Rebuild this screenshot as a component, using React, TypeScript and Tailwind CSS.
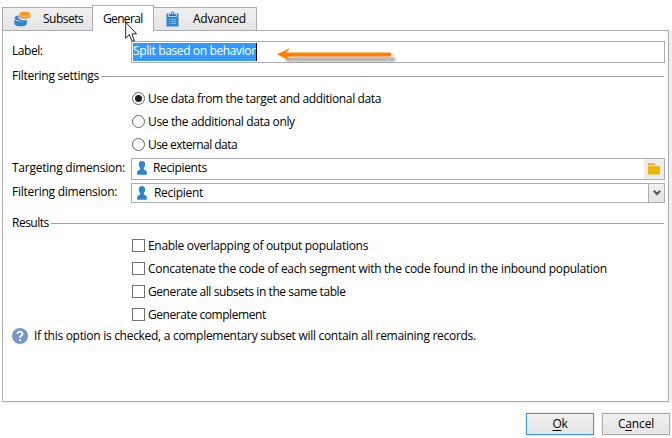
import type { ReactNode } from "react";

function SubsetsIcon() {
  return (
    <svg width="18" height="17" viewBox="0 0 18 17" className="shrink-0">
      <path d="M0.3 8C0.8 11 12.5 11 12.8 8.5V12.5C12.8 16.3 1 16.3 0.3 12.5Z" fill="#2f84d0" />
      <path d="M0.5 6.8C0.8 5.5 2.5 4.6 4.4 4.4V6.2C4.4 8.2 8 9.2 12.6 9C9.5 10.6 1 10.2 0.5 6.8Z" fill="#2f84d0" />
      <path d="M5 3.2V5.6C5 8.6 16.6 8.6 16.6 5.6V3.2Z" fill="#f39a1c" />
      <ellipse cx="10.8" cy="3" rx="5.8" ry="2.5" fill="#f39a1c" stroke="#ffe3b5" strokeWidth="0.6" />
    </svg>
  );
}

function ClipboardIcon() {
  return (
    <svg width="13" height="16" viewBox="0 0 13 16" className="shrink-0">
      <rect x="0.5" y="2.5" width="12" height="13" rx="0.5" fill="#2f84d0" />
      <path d="M2.5 5.5V3H4.3C4.3 -0.6 8.7 -0.6 8.7 3H10.5V5.5Z" fill="#2a6fb4" stroke="#e4eef8" strokeWidth="0.7" />
      <circle cx="6.5" cy="2.4" r="0.9" fill="#fff" />
      <path d="M3 8.5H4M5 8.5H10M3 10.5H4M5 10.5H10M3 12.5H4M5 12.5H10" stroke="#9fcdf2" strokeWidth="0.8" />
    </svg>
  );
}

function PersonIcon() {
  return (
    <svg width="10" height="14" viewBox="0 0 10 14" className="shrink-0">
      <path
        d="M5 0C7 0 8.2 1.4 8.2 3.4C8.2 5 7.6 6 6.9 6.8V8.6C8 9.2 9.9 9.8 9.9 11.4V13C9.9 13.5 9.5 13.8 9 13.8H1C0.5 13.8 0.1 13.5 0.1 13V11.4C0.1 9.8 2 9.2 3.1 8.6V6.8C2.4 6 1.8 5 1.8 3.4C1.8 1.4 3 0 5 0Z"
        fill="#2f84d0"
      />
    </svg>
  );
}

function FolderIcon() {
  return (
    <svg width="12" height="12" viewBox="0 0 12 12">
      <path d="M0 0.5H7V3H0Z" fill="#e08a2c" />
      <path d="M0 1.8H7.5L8 2.5H12V4H0Z" fill="#f7d8a8" />
      <path d="M0 3.3H12V11.5H0Z" fill="#efb800" />
    </svg>
  );
}

function Radio({ label, checked, tracking }: { label: string; checked?: boolean; tracking: string }) {
  return (
    <div className="flex h-[23px] items-center pl-[129px]">
      <span className="flex size-[13px] shrink-0 items-center justify-center rounded-full border border-[#666]">
        {checked && <span className="size-[7px] rounded-full bg-[#222]" />}
      </span>
      <span className={`ml-[3px] h-[17px] leading-[17px] ${tracking}`}>{label}</span>
    </div>
  );
}

function Check({ label, tracking }: { label: string; tracking: string }) {
  return (
    <div className="flex h-[23px] items-center pl-[129px]">
      <span className="size-[13px] shrink-0 border border-[#707070]" />
      <span className={`ml-[3px] h-[17px] leading-[17px] ${tracking}`}>{label}</span>
    </div>
  );
}

function Heading({ children, tracking }: { children: ReactNode; tracking: string }) {
  return (
    <div className="flex h-4 w-[661px] pl-[9px]">
      <span className={tracking}>{children}</span>
      <span className="mt-2 ml-[2px] h-px flex-1 bg-[#a0a0a0]" />
    </div>
  );
}

const tab = "flex border border-b-0 border-[#acacac]";
const idleTab = "h-[23px] bg-gradient-to-b from-[#f0f0f0] to-[#e5e5e5]";

export default function App() {
  return (
    <div className="relative h-[438px] w-[672px] overflow-hidden bg-white font-['Open_Sans','Noto_Sans',sans-serif] text-[12px] leading-4 whitespace-nowrap text-black">
      <div className="flex h-[30px] items-end pl-[2px]">
        <div className={`${tab} ${idleTab} w-[90px] border-r-0`}>
          <span className="mt-[3px] ml-[11px]"><SubsetsIcon /></span>
          <span className="mt-[3px] ml-[11px] tracking-[-0.5px]">Subsets</span>
        </div>
        <div className={`${tab} z-10 -mb-px h-[26px] w-[62px] bg-white`}>
          <span className="mt-[5px] ml-[10px] tracking-[-0.66px]">General</span>
        </div>
        <div className={`${tab} ${idleTab} w-[103px] border-l-0`}>
          <span className="mt-[3px] ml-[12px]"><ClipboardIcon /></span>
          <span className="mt-[3px] ml-[14px] tracking-[-0.25px]">Advanced</span>
        </div>
      </div>

      <div className="ml-[2px] h-[373px] bg-[#f0f0f0]">
        <div className="h-[372px] w-[667px] border border-[#acacac] bg-white pt-[10px]">
          <div className="flex h-[22px] pl-[9px]">
            <span className="mt-[2px] w-[119px] tracking-[-0.46px]">Label:</span>
            <div className="h-[22px] w-[534px] border border-[#abadb3] p-px">
              <span className="flex h-[18px] w-[124px] border-r border-black bg-[#3399ff] tracking-[-0.37px] text-white">
                <span>Split based on behavior</span>
              </span>
            </div>
          </div>

          <div className="mt-[5px]">
            <Heading tracking="tracking-[-0.27px]">Filtering settings</Heading>
          </div>
          <div className="mt-[3px]">
            <Radio checked label="Use data from the target and additional data" tracking="tracking-[-0.37px]" />
            <Radio label="Use the additional data only" tracking="tracking-[-0.35px]" />
            <Radio label="Use external data" tracking="tracking-[-0.55px]" />
          </div>

          <div className="mt-[2px] flex h-[22px] pl-[9px]">
            <span className="mt-[2px] w-[119px] tracking-[-0.24px]">Targeting dimension:</span>
            <div className="flex h-[22px] w-[534px] border border-[#abadb3]">
              <span className="mt-[2px] ml-[5px]"><PersonIcon /></span>
              <span className="mt-px ml-[6px] flex-1 tracking-[-0.36px]">Recipients</span>
              <span className="flex w-5 items-center justify-center bg-[#ececec]"><FolderIcon /></span>
            </div>
          </div>

          <div className="mt-[3px] flex h-[20px] pl-[9px]">
            <span className="mt-px w-[119px] tracking-[-0.25px]">Filtering dimension:</span>
            <div className="flex h-[20px] w-[534px] border border-[#abadb3]">
              <span className="mt-[2px] ml-[5px]"><PersonIcon /></span>
              <span className="mt-px ml-[7px] flex-1 tracking-[-0.3px]">Recipient</span>
              <span className="flex w-4 items-center justify-center border-l border-[#abadb3] bg-gradient-to-b from-[#f0f0f0] to-[#e5e5e5]">
                <svg width="8" height="6" viewBox="0 0 8 6">
                  <path d="M0.8 0.8L4 4L7.2 0.8" fill="none" stroke="#555" strokeWidth="2" />
                </svg>
              </span>
            </div>
          </div>

          <div className="mt-[12px]">
            <Heading tracking="tracking-[-0.5px]">Results</Heading>
          </div>
          <div className="mt-[3px]">
            <Check label="Enable overlapping of output populations" tracking="tracking-[-0.3px]" />
            <Check label="Concatenate the code of each segment with the code found in the inbound population" tracking="tracking-[-0.285px]" />
            <Check label="Generate all subsets in the same table" tracking="tracking-[-0.42px]" />
            <Check label="Generate complement" tracking="tracking-[-0.43px]" />
          </div>

          <div className="mt-[2px] flex h-4 pl-[9px]">
            <svg width="16" height="16" viewBox="0 0 16 16" className="shrink-0">
              <circle cx="8" cy="8" r="8" fill="#7596c8" />
              <path d="M5.5 6C5.5 2.8 10.6 2.9 10.5 5.9C10.4 7.7 8.1 7.6 8.1 9.7" fill="none" stroke="#fff" strokeWidth="1.9" />
              <circle cx="8.1" cy="12.2" r="1.15" fill="#fff" />
            </svg>
            <span className="ml-[6px] tracking-[-0.293px]">
              If this option is checked, a complementary subset will contain all remaining records.
            </span>
          </div>
        </div>
      </div>

      <div className="mt-[9px] flex gap-[6px] pl-[525px]">
        <div className="border border-[#f0f0f0]">
          <div className="h-[22px] w-[68px] border border-[#3399ff] bg-gradient-to-b from-[#f0f0f0] to-[#e5e5e5] pt-[2px] text-center tracking-[-0.2px]">
            <span className="underline underline-offset-2">O</span>k
          </div>
        </div>
        <div className="border border-[#f0f0f0]">
          <div className="h-[22px] w-[68px] border border-[#acacac] bg-gradient-to-b from-[#f0f0f0] to-[#e5e5e5] pt-[2px] text-center tracking-[-0.15px]">
            C<span className="underline underline-offset-2">a</span>ncel
          </div>
        </div>
      </div>

      <svg className="absolute top-[42px] left-[274px] z-20" width="126" height="26" viewBox="0 0 126 26">
        <defs>
          <filter id="soft" filterUnits="userSpaceOnUse" x="0" y="0" width="126" height="26">
            <feGaussianBlur stdDeviation="1.2" />
          </filter>
        </defs>
        <path d="M14 17.3H119" stroke="#777" strokeOpacity="0.55" strokeWidth="5" strokeLinecap="round" filter="url(#soft)" />
        <path d="M9 12.5H115.5" stroke="#ff8000" strokeWidth="4" strokeLinecap="round" />
        <path d="M4 12.3L15 7L10.5 12.3L15 17.8Z" fill="#ff8000" stroke="#ff8000" strokeLinejoin="round" />
      </svg>

      <svg className="absolute top-[21px] left-[125px] z-20" width="14" height="22" viewBox="0 0 14 22">
        <path d="M0.7 1.3V17.2L4.3 13.7L7 20H9.4L6.9 12.9H11.6Z" fill="#fff" stroke="#22222c" strokeWidth="1" />
      </svg>
    </div>
  );
}
